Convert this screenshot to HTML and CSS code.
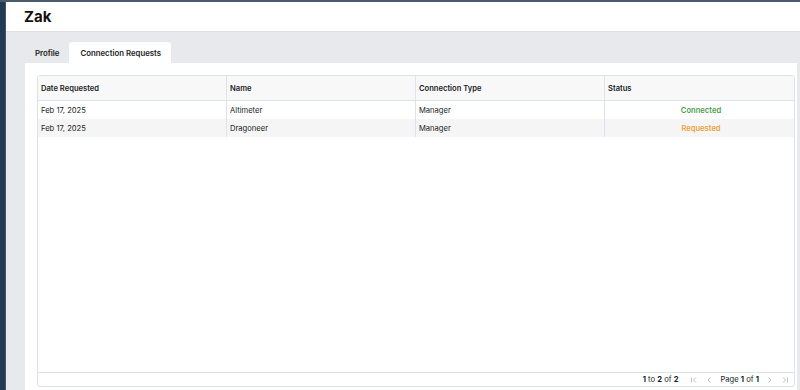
FILE: index.html
```html
<!DOCTYPE html>
<html lang="en">
<head>
    <meta charset="UTF-8">
    <meta name="viewport" content="width=device-width, initial-scale=1.0">
    <title>Zak</title>
    <link rel="stylesheet" href="styles.css">
</head>
<body>
    <div class="app">
        <div class="sidebar"></div>
        <div class="main">
            <header class="page-header">
                <h1>Zak</h1>
            </header>
            <div class="content">
                <div class="tabs">
                    <div class="tab">Profile</div>
                    <div class="tab active">Connection Requests</div>
                </div>
                <div class="panel">
                    <div class="grid">
                        <div class="grid-row grid-head">
                            <div class="cell">Date Requested</div>
                            <div class="cell">Name</div>
                            <div class="cell">Connection Type</div>
                            <div class="cell">Status</div>
                        </div>
                        <div class="grid-body">
                            <div class="grid-row">
                                <div class="cell">Feb 17, 2025</div>
                                <div class="cell">Altimeter</div>
                                <div class="cell">Manager</div>
                                <div class="cell status connected">Connected</div>
                            </div>
                            <div class="grid-row odd">
                                <div class="cell">Feb 17, 2025</div>
                                <div class="cell">Dragoneer</div>
                                <div class="cell">Manager</div>
                                <div class="cell status requested">Requested</div>
                            </div>
                        </div>
                        <div class="grid-footer">
                            <span><b>1</b> to <b>2</b> of <b>2</b></span>
                            <span class="pager">
                                <svg width="8" height="8" viewBox="0 0 8 8"><path d="M1.5 1.5v5M6 1.5L3.5 4 6 6.5" fill="none" stroke="#b5b8bd" stroke-width="0.9"/></svg>
                                <svg width="8" height="8" viewBox="0 0 8 8"><path d="M5.5 1.5L3 4l2.5 2.5" fill="none" stroke="#b5b8bd" stroke-width="0.9"/></svg>
                                <span>Page <b>1</b> of <b>1</b></span>
                                <svg width="8" height="8" viewBox="0 0 8 8"><path d="M2.5 1.5L5 4 2.5 6.5" fill="none" stroke="#b5b8bd" stroke-width="0.9"/></svg>
                                <svg width="8" height="8" viewBox="0 0 8 8"><path d="M2 1.5L4.5 4 2 6.5M6.5 1.5v5" fill="none" stroke="#b5b8bd" stroke-width="0.9"/></svg>
                            </span>
                        </div>
                    </div>
                </div>
            </div>
        </div>
    </div>
</body>
</html>
```

FILE: styles.css
```css
body {
    margin: 0;
    font-family: 'Inter', 'Liberation Sans', sans-serif;
    color: #181d1f;
    background: #e8e9ec;
    overflow: hidden;
}
.app {
    display: flex;
    height: 390px;
    border-top: 2px solid #4a5a6c;
    box-sizing: border-box;
}
.sidebar {
    width: 6px;
    background: #233a55;
    border-right: 1px solid #3e5670;
    box-sizing: border-box;
}
.main {
    flex: 1;
    display: flex;
    flex-direction: column;
}
.page-header {
    height: 29px;
    background: #fff;
    display: flex;
    align-items: center;
    padding-left: 18px;
    border-bottom: 1px solid #dfe0e3;
}
.page-header h1 {
    margin: 0;
    font-size: 15px;
    font-weight: 700;
    color: #111;
}
.content {
    flex: 1;
    display: flex;
    flex-direction: column;
    padding: 10px 3px 0 19px;
    min-height: 0;
}
.tabs {
    display: flex;
    height: 21px;
}
.tab {
    font-size: 7.8px;
    font-weight: 600;
    color: #222;
    padding: 0 10px;
    display: flex;
    align-items: center;
    border-radius: 3px 3px 0 0;
}
.tab.active {
    background: #fff;
    padding: 0 10px 0 11px;
}
.panel {
    flex: 1;
    background: #fff;
    padding: 12px 2px 3px 12px;
    display: flex;
    min-height: 0;
}
.grid {
    flex: 1;
    display: flex;
    flex-direction: column;
    border: 1px solid #dde2eb;
    border-radius: 3px;
    font-size: 7.6px;
}
.grid-row {
    display: grid;
    grid-template-columns: 189px 189px 189px 1fr;
    height: 18px;
}
.grid-head {
    height: 24px;
    background: #f8f8f8;
    border-bottom: 1px solid #dde2eb;
    font-weight: 600;
}
.cell {
    display: flex;
    align-items: center;
    padding-left: 3px;
    border-right: 1px solid #dde2eb;
    white-space: nowrap;
}
.cell:last-child {
    border-right: none;
}
.grid-body {
    flex: 1;
}
.odd {
    background: #f5f5f5;
}
.status {
    justify-content: center;
    font-weight: 600;
}
.connected {
    color: #4a9e4f;
}
.requested {
    color: #f0a23a;
}
.grid-footer {
    height: 13px;
    border-top: 1px solid #dde2eb;
    display: flex;
    align-items: center;
    justify-content: flex-end;
    padding-right: 5px;
    font-size: 7.6px;
    gap: 12px;
}
.grid-footer b {
    font-weight: 700;
}
.pager {
    display: flex;
    align-items: center;
    gap: 7px;
}
```
